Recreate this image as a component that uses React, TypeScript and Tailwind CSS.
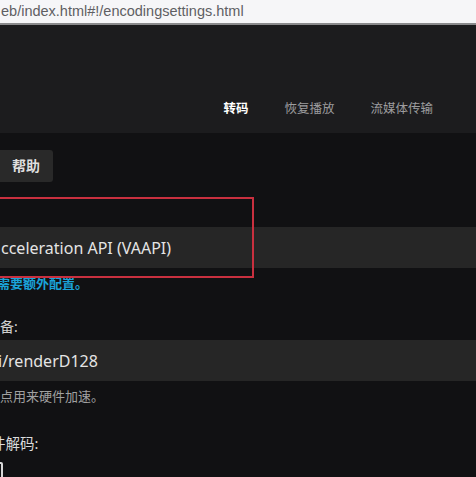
import React from 'react'

const font = { fontFamily: '"Noto Sans", "Noto Sans CJK SC", sans-serif' }

export default function App() {
    return (
        <div
            className="relative w-[476px] h-[477px] overflow-hidden bg-[#111113] text-[#e0e0e0]"
            style={font}
        >
            {/* browser address bar */}
            <div className="h-[25px] bg-[#f6f6f8] border-b-2 border-[#8a8a8c] flex items-center pl-[1px]">
                <span
                    className="whitespace-nowrap text-[14.5px] leading-none text-[#5f5f63]"
                    style={{ fontFamily: '"Liberation Sans", Arial, sans-serif' }}
                >
                    eb/index.html#!/encodingsettings.html
                </span>
            </div>

            {/* header with tabs */}
            <div className="h-[108px] bg-[#1c1c1e] flex items-end justify-end pr-[43px] pb-[18px]">
                <nav className="flex gap-[36px] text-[12.5px] leading-none">
                    <span className="text-white font-bold">转码</span>
                    <span className="text-[#9c9c9e]">恢复播放</span>
                    <span className="text-[#9c9c9e]">流媒体传输</span>
                </nav>
            </div>

            {/* page body */}
            <div className="flex flex-col">
                <div className="mt-[17px] h-[32px] w-[57px] -ml-[4px] rounded-[3px] bg-[#292929] flex items-center justify-end pr-[13px]">
                    <span className="text-[14px] font-bold text-[#dedede] leading-none">帮助</span>
                </div>

                {/* label row (lies off the left edge) */}
                <div className="mt-[18px] h-[20px]" />

                <div className="mt-[7px] h-[41px] bg-[#262626] flex items-center pl-[1px]">
                    <span className="whitespace-nowrap text-[16px] text-[#e4e4e4]">
                        cceleration API (VAAPI)
                    </span>
                </div>

                <div className="mt-[7px] h-[16px] flex items-center overflow-hidden">
                    <span className="-ml-[3px] whitespace-nowrap text-[13px] font-bold text-[#1aa3d9] leading-none">
                        需要额外配置。
                    </span>
                </div>

                <div className="mt-[27px] h-[18px] flex items-center">
                    <span className="whitespace-nowrap text-[14px] text-[#d0d0d0] leading-none">备:</span>
                </div>

                <div className="mt-[4px] h-[41px] bg-[#262626] flex items-center overflow-hidden">
                    <span className="-ml-[2px] whitespace-nowrap text-[16px] text-[#e4e4e4]">
                        i/renderD128
                    </span>
                </div>

                <div className="mt-[7px] h-[16px] flex items-center">
                    <span className="whitespace-nowrap text-[13px] text-[#a0a0a0] leading-none">
                        点用来硬件加速。
                    </span>
                </div>

                <div className="mt-[29px] h-[20px] flex items-center overflow-hidden">
                    <span className="-ml-[9px] whitespace-nowrap text-[14.5px] text-[#dcdcdc] leading-none">
                        件解码:
                    </span>
                </div>

                <div className="mt-[9px] h-[18px] w-[18px] -ml-[15px] border-2 border-[#d8d8d8] rounded-[2px]" />
            </div>

            {/* red annotation box */}
            <div className="absolute left-[-10px] top-[197px] w-[264px] h-[81px] border-2 border-[#c9303f]" />
        </div>
    )
}
